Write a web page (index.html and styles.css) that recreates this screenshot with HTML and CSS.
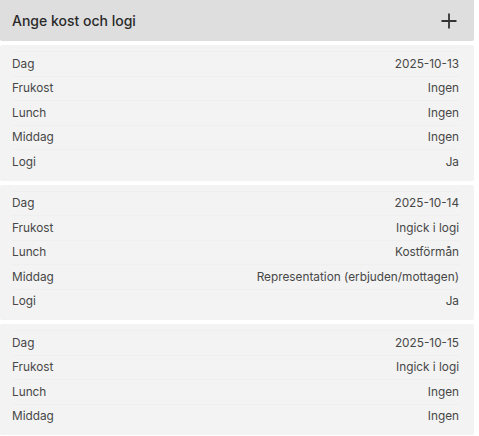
FILE: index.html
```html
<!DOCTYPE html>
<html lang="sv">
<head>
<meta charset="utf-8">
<link rel="stylesheet" href="styles.css">
</head>
<body>
<div class="panel">
  <div class="header">
    <span class="title">Ange kost och logi</span>
    <svg class="plus" width="16" height="16" viewBox="0 0 16 16"><path d="M8 0.5V15.5M0.5 8H15.5" stroke="#333" stroke-width="1.8" fill="none"/></svg>
  </div>
  <div class="card">
    <div class="row"><span>Dag</span><span>2025-10-13</span></div>
    <div class="row"><span>Frukost</span><span>Ingen</span></div>
    <div class="row"><span>Lunch</span><span>Ingen</span></div>
    <div class="row"><span>Middag</span><span>Ingen</span></div>
    <div class="row"><span>Logi</span><span>Ja</span></div>
  </div>
  <div class="card">
    <div class="row"><span>Dag</span><span>2025-10-14</span></div>
    <div class="row"><span>Frukost</span><span>Ingick i logi</span></div>
    <div class="row"><span>Lunch</span><span>Kostförmån</span></div>
    <div class="row"><span>Middag</span><span>Representation (erbjuden/mottagen)</span></div>
    <div class="row"><span>Logi</span><span>Ja</span></div>
  </div>
  <div class="card">
    <div class="row"><span>Dag</span><span>2025-10-15</span></div>
    <div class="row"><span>Frukost</span><span>Ingick i logi</span></div>
    <div class="row"><span>Lunch</span><span>Ingen</span></div>
    <div class="row"><span>Middag</span><span>Ingen</span></div>
  </div>
</div>
</body>
</html>
```
FILE: styles.css
```css
html, body {
  margin: 0;
  padding: 0;
  background: #ffffff;
}
body {
  font-family: Inter, "Noto Sans", sans-serif;
  color: #333333;
}
.panel {
  width: 474px;
  display: flex;
  flex-direction: column;
  gap: 4px;
}
.header {
  height: 41px;
  background: #dedede;
  display: flex;
  align-items: center;
  justify-content: space-between;
  padding: 0 17px 0 12px;
  box-sizing: border-box;
  border-radius: 0 0 2px 2px;
}
.title {
  font-size: 14px;
  font-weight: 500;
  color: #2a2a2a;
}
.plus {
  display: block;
  margin-top: 1px;
}
.card {
  background: #f3f3f3;
  padding: 6px 15px 7px 12px;
  display: flex;
  flex-direction: column;
  border-radius: 2px;
}
.row {
  height: 24.5px;
  display: flex;
  align-items: center;
  justify-content: space-between;
  font-size: 11.8px;
  color: #474747;
  border-top: 1px solid #efefef;
  box-sizing: border-box;
}
```
